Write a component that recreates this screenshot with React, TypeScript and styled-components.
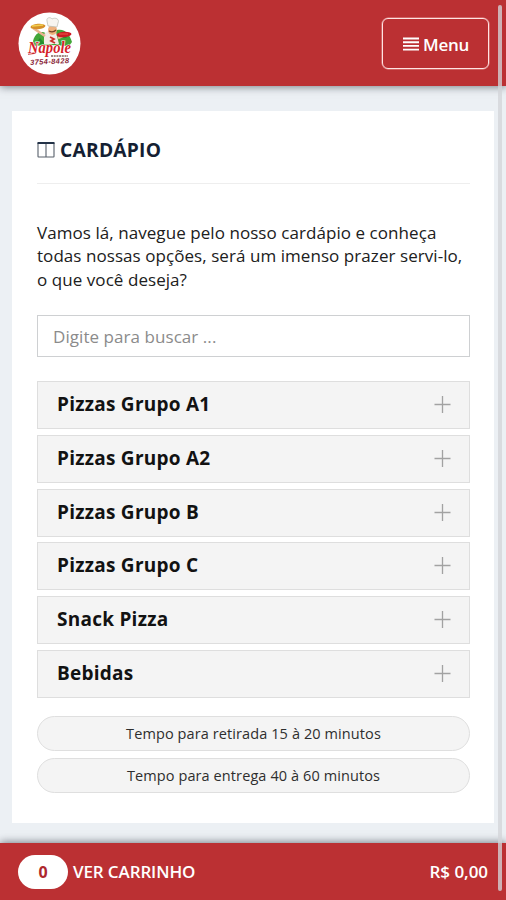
import React from "react";
import styled, { createGlobalStyle } from "styled-components";

const GlobalStyle = createGlobalStyle`
  *, *::before, *::after { box-sizing: border-box; }
  body { margin: 0; background: #ecf0f4; overflow: hidden; }
  body, button, input { font-family: "Open Sans", "Noto Sans", sans-serif; }
`;

const Page = styled.div`
  position: relative;
  display: flex;
  flex-direction: column;
  width: 506px;
  height: 900px;
  background: #ecf0f4;
  color: #181818;
`;

const Header = styled.header`
  display: flex;
  flex: none;
  align-items: center;
  justify-content: space-between;
  height: 86px;
  padding: 0 17px 0 18px;
  background: #bb3033;
  box-shadow: 0 1px 8px rgba(60, 65, 75, 0.65);
`;

const LogoDrawing = styled.svg`
  display: block;
  width: 63px;
  height: 63px;
`;

const MenuButton = styled.button`
  display: flex;
  align-items: center;
  justify-content: center;
  gap: 4px;
  width: 107px;
  height: 51px;
  margin-top: 1px;
  padding: 1px 0 0 1px;
  border: 1px solid #ffe3e3;
  border-radius: 6px;
  background: transparent;
  box-shadow: 0 0 0 0.5px #e79292;
  color: #fff;
  font-size: 17px;
  font-weight: 600;
  letter-spacing: -0.3px;
`;

const Content = styled.main`
  flex: 1;
  padding: 25px 12px 20px 12px;
`;

const Card = styled.section`
  display: flex;
  flex-direction: column;
  height: 712px;
  padding: 0 24px 0 25px;
  background: #fff;
`;

const Title = styled.h1`
  display: flex;
  align-items: center;
  gap: 5px;
  height: 73px;
  margin: 0;
  padding-top: 5px;
  border-bottom: 1px solid #eee;
  color: #151f33;
  font-size: 19.2px;
  font-weight: 700;
  letter-spacing: 0.25px;
`;

const Intro = styled.p`
  height: 71px;
  margin: 37px 0 23px;
  color: #202020;
  font-size: 17px;
  line-height: 23.3px;
  letter-spacing: 0.06px;
  white-space: nowrap;
`;

const Search = styled.input`
  flex: none;
  width: 433px;
  height: 42px;
  margin: 0 0 24px;
  padding: 0 15px;
  border: 1px solid #ced0d2;
  border-radius: 0;
  outline: 0;
  background: #fff;
  font-size: 17px;
  letter-spacing: 0.06px;
  &::placeholder { color: #8b8b8b; opacity: 1; }
`;

const Groups = styled.div`
  display: flex;
  flex-direction: column;
  gap: 5.8px;
`;

const Group = styled.button`
  display: flex;
  align-items: center;
  justify-content: space-between;
  width: 433px;
  height: 48px;
  padding: 0 18px 1px 19px;
  border: 1px solid #dedede;
  background: #f4f4f4;
  color: #121212;
  font-size: 19px;
  font-weight: 700;
  letter-spacing: 0.25px;
`;

const GroupName = styled.span`
  margin-top: -1px;
`;

const PlusDrawing = styled.svg`
  display: block;
  width: 17px;
  height: 17px;
`;

const Times = styled.div`
  display: flex;
  flex-direction: column;
  gap: 7px;
  margin-top: 18px;
`;

const Time = styled.div`
  display: flex;
  align-items: center;
  justify-content: center;
  width: 433px;
  height: 35px;
  border: 1px solid #dfdfdf;
  border-radius: 18px;
  background: #f4f4f4;
  color: #2e2e2e;
  font-size: 14.5px;
  letter-spacing: 0.1px;
`;

const CartBar = styled.footer`
  display: flex;
  flex: none;
  align-items: center;
  height: 57px;
  padding: 0 18px;
  background: #bb3033;
  box-shadow: 0 -1px 8px rgba(60, 65, 75, 0.65);
  color: #fff;
  font-size: 17px;
  font-weight: 600;
`;

const Count = styled.span`
  display: flex;
  align-items: center;
  justify-content: center;
  width: 50px;
  height: 34px;
  margin-right: 5px;
  border-radius: 17px;
  background: #fff;
  color: #ae282d;
  font-size: 16px;
  font-weight: 700;
`;

const CartLabel = styled.span`
  letter-spacing: -0.12px;
`;

const Total = styled.span`
  margin-left: auto;
  letter-spacing: -0.05px;
`;

const ScrollThumb = styled.div`
  position: absolute;
  top: 5px;
  left: 498px;
  width: 4px;
  height: 886px;
  border-radius: 2px;
  background: rgba(211, 213, 216, 0.78);
`;

const groups = ["Pizzas Grupo A1", "Pizzas Grupo A2", "Pizzas Grupo B", "Pizzas Grupo C", "Snack Pizza", "Bebidas"];
const times = ["Tempo para retirada 15 à 20 minutos", "Tempo para entrega 40 à 60 minutos"];

function Logo() {
  return (
    <LogoDrawing viewBox="0 0 63 63" role="img" aria-label="Napole">
      <circle cx="31.5" cy="31.5" r="31" fill="#fff" />
      <path d="M15 34c-1-7 3-14 9-14 5 0 8 6 10 13zM32 33c0-7 1-13 7-15 8-2 13 5 15 12l-3 4z" fill="#42a638" />
      <path d="M17 32l5-6 5 6zM39 26l5-6 5 6z" fill="#238d31" />
      <path d="M26 22l4-3 8 1 3 12H26z" fill="#f2ece6" />
      <path d="M15 16l12 8M40 26l9-4" stroke="#e8b28e" strokeWidth="2.5" />
      <ellipse cx="34.5" cy="18" rx="4.5" ry="5" fill="#efb27d" />
      <path d="M30 14l-1-5c-1-4 4-4 5-2 3-2 8 0 6 4l-1 4z" fill="#f7f5f0" stroke="#b7bbb2" strokeWidth=".7" />
      <path d="M31 19q4 2 7-1" fill="none" stroke="#744326" strokeWidth="1.3" />
      <path d="M32 25l4 2-3 2 4 2" stroke="#c9302b" strokeWidth="1.8" fill="none" />
      <ellipse cx="20" cy="14.5" rx="7.5" ry="2.7" fill="#d6902a" transform="rotate(-5 20 14.5)" />
      <path d="M14 14l11-1" stroke="#f1cf50" strokeWidth="1.5" />
      <ellipse cx="46" cy="22.5" rx="7.5" ry="2.8" fill="#cd1925" transform="rotate(-4 46 22.5)" />
      <path d="M41 22h9" stroke="#e95a45" strokeWidth="1" />
      <path d="M10 42l8-1" fill="none" stroke="#c92930" strokeWidth="1.5" />
      <text x="10" y="41" fill="#d51f2b" stroke="#fff" strokeWidth="1.2" paintOrder="stroke" fontFamily="Liberation Serif, serif" fontSize="17" fontWeight="700" fontStyle="italic" textLength="43" lengthAdjust="spacingAndGlyphs">Napole</text>
      <path d="M33 44h17" stroke="#80605b" strokeWidth="1.4" strokeDasharray="2 .7" />
      <text x="12" y="52" fill="#8a2739" fontFamily="Liberation Sans, sans-serif" fontSize="7.5" fontWeight="700" fontStyle="italic" textLength="39" lengthAdjust="spacing" transform="rotate(-3 31 49)">3754-8428</text>
    </LogoDrawing>
  );
}

function MenuIcon() {
  return <svg width="16" height="14" viewBox="0 0 16 14"><path d="M0 1.5h16M0 5.2h16M0 8.9h16M0 12.6h16" stroke="#fff" strokeWidth="1.9" /></svg>;
}

function ColumnsIcon() {
  return <svg width="18" height="17" viewBox="0 0 18 17"><path d="M1 2v13.5q0 .5.5.5h15q.5 0 .5-.5V2M9 3v13" fill="none" stroke="#58606b" strokeWidth="1.1" /><path d="M.5 2h17" stroke="#243348" strokeWidth="2" /></svg>;
}

function PlusIcon() {
  return <PlusDrawing viewBox="0 0 17 17"><path d="M8.5 0v17M.5 8.5h16" stroke="#a2a2a2" strokeWidth="1.3" /></PlusDrawing>;
}

export default function App() {
  return (
    <>
      <GlobalStyle />
      <Page>
        <Header><Logo /><MenuButton><MenuIcon />Menu</MenuButton></Header>
        <Content>
          <Card>
            <Title><ColumnsIcon />CARDÁPIO</Title>
            <Intro>Vamos lá, navegue pelo nosso cardápio e conheça<br />todas nossas opções, será um imenso prazer servi-lo,<br />o que você deseja?</Intro>
            <Search placeholder="Digite para buscar ..." aria-label="Buscar" />
            <Groups>{groups.map(name => <Group key={name}><GroupName>{name}</GroupName><PlusIcon /></Group>)}</Groups>
            <Times>{times.map(text => <Time key={text}>{text}</Time>)}</Times>
          </Card>
        </Content>
        <CartBar><Count>0</Count><CartLabel>VER CARRINHO</CartLabel><Total>R$ 0,00</Total></CartBar>
        <ScrollThumb />
      </Page>
    </>
  );
}
